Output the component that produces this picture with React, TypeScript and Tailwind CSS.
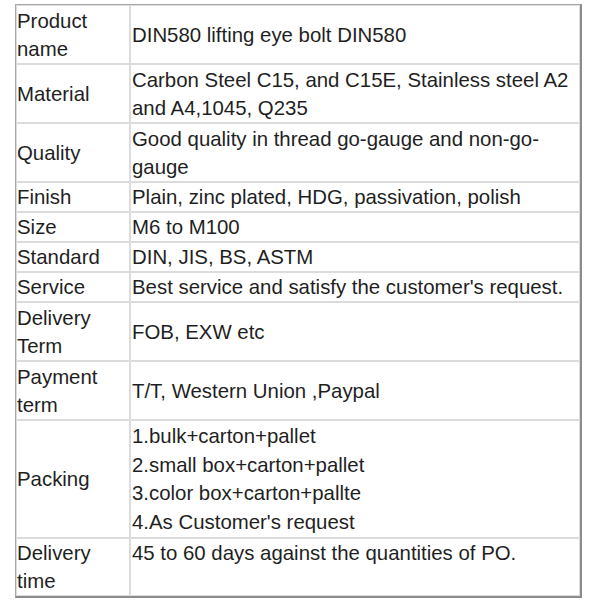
const rows: { label: string; value: string[]; h: string; top?: boolean }[] = [
  { label: 'Product name', value: ['DIN580 lifting eye bolt DIN580'], h: 'h-[59px]' },
  { label: 'Material', value: ['Carbon Steel C15, and C15E, Stainless steel A2 and A4,1045, Q235'], h: 'h-[59px]' },
  { label: 'Quality', value: ['Good quality in thread go-gauge and non-go-gauge'], h: 'h-[59px]' },
  { label: 'Finish', value: ['Plain, zinc plated, HDG, passivation, polish'], h: 'h-[29px]' },
  { label: 'Size', value: ['M6 to M100'], h: 'h-[30px]' },
  { label: 'Standard', value: ['DIN, JIS, BS, ASTM'], h: 'h-[30px]' },
  { label: 'Service', value: ["Best service and satisfy the customer's request."], h: 'h-[30px]' },
  { label: 'Delivery Term', value: ['FOB, EXW etc'], h: 'h-[59px]' },
  { label: 'Payment term', value: ['T/T, Western Union ,Paypal'], h: 'h-[59px]' },
  {
    label: 'Packing',
    value: [
      '1.bulk+carton+pallet',
      '2.small box+carton+pallet',
      '3.color box+carton+pallte',
      "4.As Customer's request",
    ],
    h: 'h-[118px]',
  },
  { label: 'Delivery time', value: ['45 to 60 days against the quantities of PO.'], h: 'h-[58px]', top: true },
];

export default function App() {
  return (
    <div className="w-[600px] h-[600px] bg-white pt-[4px] pl-[15px]">
      <div className="w-[567px] border-l border-t border-l-[#a8a8a8] border-t-[#a8a8a8] border-r-2 border-b-2 border-r-[#8c8c8c] border-b-[#8c8c8c]">
        <table
          className="w-full border-separate border-spacing-0 text-[20.4px] leading-[28px] text-[#1f1f1f]"
          style={{ fontFamily: '"Liberation Sans", Arial, sans-serif' }}
        >
          <tbody>
            {rows.map((r) => (
              <tr key={r.label} className={r.h}>
                <td className="w-[114px] align-middle border border-[#dcdcdc] pl-0 pr-1 py-0">
                  {r.label}
                </td>
                <td
                  className={
                    r.top
                      ? 'align-top border border-[#dcdcdc] pl-[1px] pr-1 py-0'
                      : 'align-middle border border-[#dcdcdc] pl-[1px] pr-1 py-0'
                  }
                >
                  {r.value.map((v) => (
                    <div key={v} className={r.value.length > 1 ? 'leading-[28.5px]' : ''}>
                      {v}
                    </div>
                  ))}
                </td>
              </tr>
            ))}
          </tbody>
        </table>
      </div>
    </div>
  );
}
